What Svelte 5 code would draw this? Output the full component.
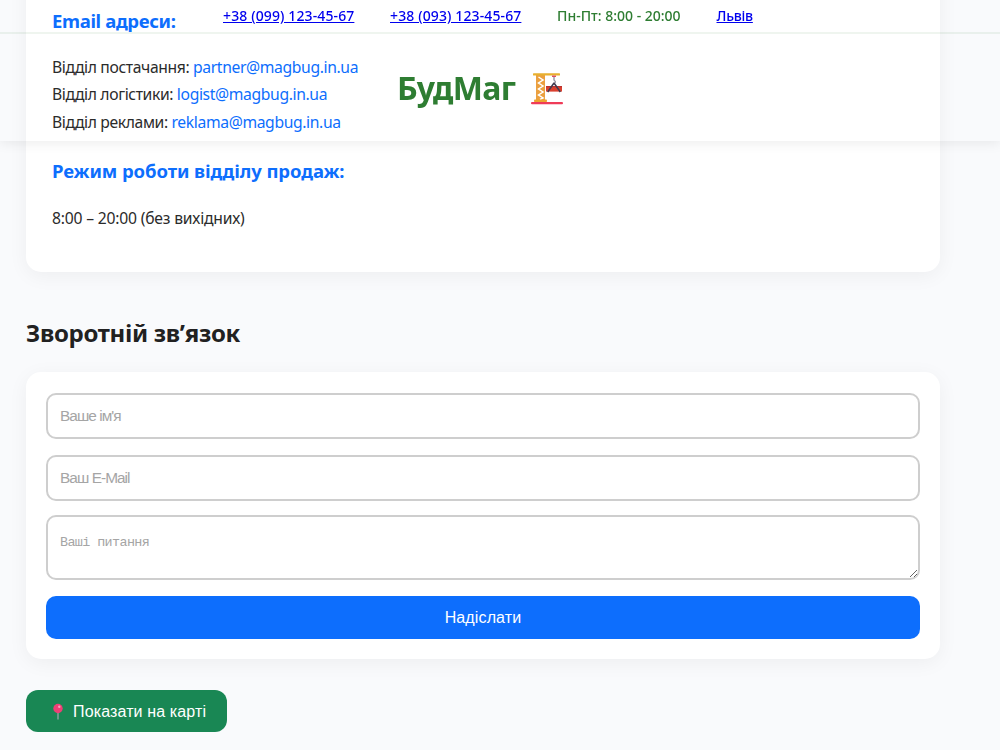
<script lang="ts">
  type Department = {
    name: string;
    email: string;
  };

  const departments: Department[] = [
    { name: 'Відділ постачання', email: 'partner@magbug.in.ua' },
    { name: 'Відділ логістики', email: 'logist@magbug.in.ua' },
    { name: 'Відділ реклами', email: 'reklama@magbug.in.ua' }
  ];

  const phones = ['+38 (099) 123-45-67', '+38 (093) 123-45-67'];

  let name = $state('');
  let email = $state('');
  let question = $state('');

  function submit(event: SubmitEvent) {
    event.preventDefault();
    name = '';
    email = '';
    question = '';
  }
</script>

<header class="site-header">
  <div class="topbar">
    {#each phones as phone}
      <a class="phone" href={`tel:${phone.replace(/[^+\d]/g, '')}`}>{phone}</a>
    {/each}
    <span class="hours">Пн-Пт: 8:00 - 20:00</span>
    <a class="city" href="#city">Львів</a>
  </div>
  <div class="brand">
    <span class="brand-name">БудМаг</span>
    <svg class="crane" viewBox="0 0 34 34" aria-hidden="true">
      <path d="M6 3h9v26H6z" fill="#eba03f" />
      <path d="M8.5 5l4.5 3-4.5 3 4.5 3-4.5 3 4.5 3-4.5 3 4.5 3-3 1.5" fill="none" stroke="#fff" stroke-width="1.5" />
      <rect x="3" y="1.2" width="27" height="2.4" rx="0.6" fill="#e8b02f" />
      <rect x="4" y="27.5" width="13" height="2.6" rx="0.8" fill="#eda42f" />
      <rect x="1" y="30" width="32" height="2.3" rx="1" fill="#ef3b58" />
      <rect x="16" y="14" width="16" height="5.6" fill="#d9402f" />
      <path d="M16 14.6h16" stroke="#b9322f" stroke-width="1.2" />
      <path d="M22 3.6h4v1.3h-4z" fill="#d83a55" />
      <path d="M24 5v3.5M24 8.5c2 .6 1.7 2.6 0 2.7v1.6" fill="none" stroke="#8d8a98" stroke-width="1.3" />
      <path d="M24 11l-6.3 9M24 11l6.3 9" fill="none" stroke="#403b50" stroke-width="1.5" />
    </svg>
  </div>
</header>

<main class="page">
  <section class="card contacts">
    <h3 class="emails-title">Email адреси:</h3>
    <ul class="emails">
      {#each departments as item}
        <li>{item.name}: <a href={`mailto:${item.email}`}>{item.email}</a></li>
      {/each}
    </ul>
    <h3 class="schedule-title">Режим роботи відділу продаж:</h3>
    <p class="schedule">8:00 – 20:00 (без вихідних)</p>
  </section>

  <h2>Зворотній зв’язок</h2>

  <form class="card feedback" onsubmit={submit}>
    <input type="text" placeholder="Ваше ім'я" bind:value={name} />
    <input type="email" placeholder="Ваш E-Mail" bind:value={email} />
    <textarea placeholder="Ваші питання" bind:value={question}></textarea>
    <button class="send" type="submit">Надіслати</button>
  </form>

  <button class="map" type="button">
    <svg viewBox="0 0 12 18" aria-hidden="true">
      <path d="M6 9v7.6" stroke="#9aa5a8" stroke-width="1.3" />
      <circle cx="6" cy="5.5" r="4.7" fill="#ee3f76" />
      <circle cx="7.3" cy="3.8" r="1.2" fill="#ff9dbb" />
    </svg>
    <span>Показати на карті</span>
  </button>
</main>

<style>
  :global(body) { margin: 0; overflow: hidden; background: #f9fafc; color: #2b2b2b; font-family: "Noto Sans", "Open Sans", sans-serif; }

  /* the header floats over the scrolled page */
  .site-header { position: fixed; inset: 0 0 auto; z-index: 2; box-sizing: border-box; height: 141px; box-shadow: 0 2px 12px rgba(0, 0, 0, 0.08); }
  .topbar { display: flex; box-sizing: border-box; height: 34px; padding-left: 223px; border-bottom: 2px solid rgba(46, 125, 50, 0.08); font-size: 14px; font-weight: 500; line-height: 32px; white-space: nowrap; }
  .topbar a { color: #0000ee; }
  .phone { width: 131px; margin-right: 36px; letter-spacing: 0.12px; }
  .hours { width: 124px; margin-right: 35.5px; color: #2e7d32; }
  .city { letter-spacing: -0.25px; }
  .brand { display: flex; align-items: center; height: 108px; padding-left: 397px; gap: 15px; }
  .brand-name { width: 118px; color: #2e7d32; font-size: 32px; font-weight: 700; letter-spacing: -0.6px; line-height: 1; white-space: nowrap; }
  .crane { width: 34px; height: 34px; margin-top: 2px; }

  .page { display: grid; width: 914px; margin: -40px 0 0 26px; }
  .card { box-sizing: border-box; border-radius: 15px; background: #fff; box-shadow: 0 4px 20px rgba(0, 0, 0, 0.05); }
  .contacts { height: 312px; padding: 47px 26px 0; }
  h2, h3, p, ul { margin: 0; padding: 0; }
  h3 { color: #0d6efd; font-size: 18.5px; font-weight: 700; line-height: 28px; }
  .emails-title { letter-spacing: -0.35px; }
  .schedule-title { letter-spacing: -0.1px; }
  .emails { margin: 18.6px 0 20.9px; list-style: none; font-size: 15.7px; letter-spacing: -0.37px; line-height: 27.5px; }
  .emails a { color: #0d6efd; text-decoration: none; }
  .schedule { margin-top: 19px; font-size: 15.7px; letter-spacing: -0.2px; line-height: 28px; }
  h2 { margin: 44px 0 22px; color: #212121; font-size: 24px; letter-spacing: -0.32px; line-height: 34px; }

  .feedback { display: flex; flex-direction: column; height: 287px; padding: 21px 20px 20px; }
  input, textarea { box-sizing: border-box; width: 100%; margin: 0 0 16px; padding: 12px; border: 2px solid #cecece; border-radius: 10px; outline: 0; background: #fff; font-family: "Liberation Sans", Arial, sans-serif; font-size: 15.4px; letter-spacing: -0.95px; }
  input { height: 46px; }
  textarea { height: 65px; margin-top: -2px; padding-top: 18px; font-family: "Liberation Mono", monospace; font-size: 13.4px; letter-spacing: -0.6px; }
  ::placeholder { color: #a5a5a5; opacity: 1; }
  button { border: 0; color: #fff; font-family: "Liberation Sans", Arial, sans-serif; font-size: 16px; letter-spacing: 0.13px; }
  .send { height: 43px; padding: 0; border-radius: 10px; background: #0d6efd; }
  .map { display: flex; align-items: center; justify-self: start; width: 201px; height: 42px; margin-top: 31px; padding: 2px 0 0 26px; border-radius: 12px; background: #198754; white-space: nowrap; }
  .map svg { width: 12px; height: 18px; margin-right: 9px; }
</style>
